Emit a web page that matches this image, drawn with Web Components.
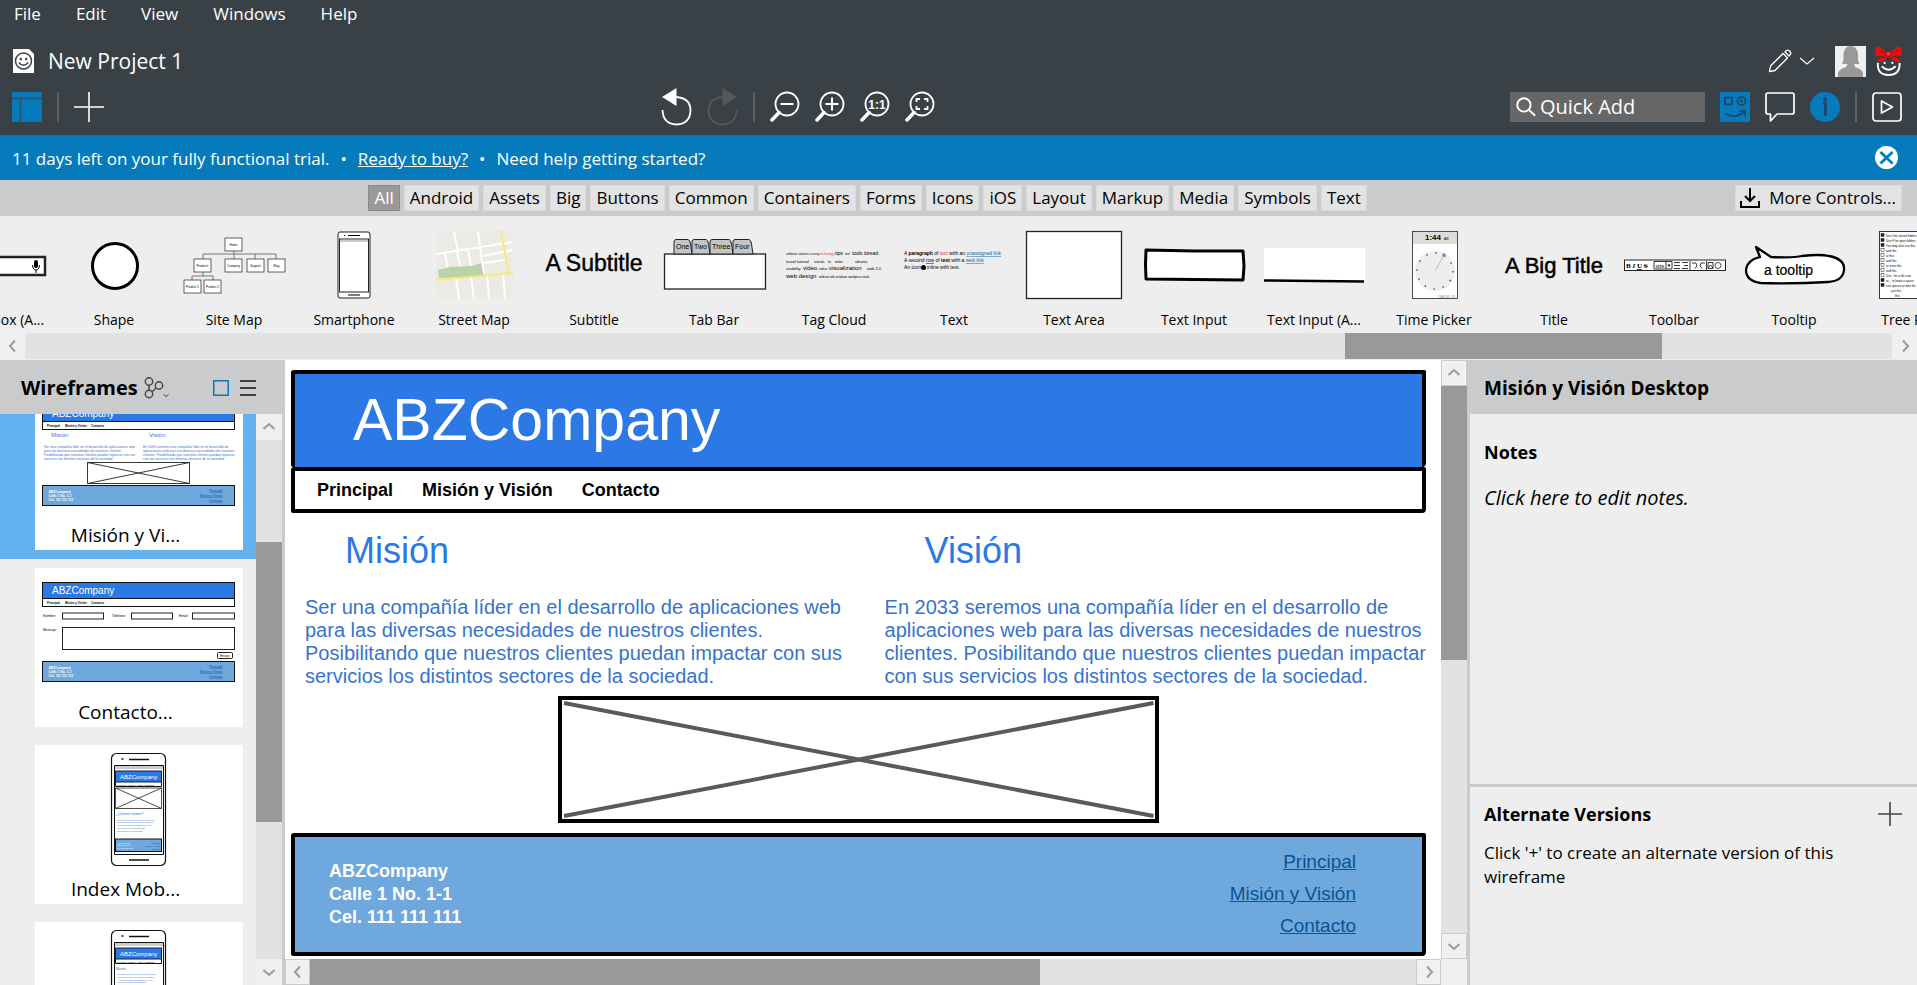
<!DOCTYPE html>
<html lang="en">
<head>
<meta charset="utf-8">
<title>New Project 1</title>
<style>
html, body { margin: 0; height: 100%; }
body { font-family: "Open Sans", "Noto Sans", sans-serif; font-size: 17px; color: #000; background: #eee; overflow: hidden; }
</style>
</head>
<body>
<wire-app></wire-app>
<script>
const base = `*{box-sizing:border-box}button{font:inherit;color:inherit;background:none;border:0;padding:0;margin:0;cursor:pointer}svg{display:block}h1,h2,h3,p,ul{margin:0;padding:0}a{color:inherit}`;
const define = (name, css, html) => customElements.define(name, class extends HTMLElement {
  constructor() {
    super();
    const markup = typeof html === 'function' ? html(this) : html;
    this.attachShadow({ mode: 'open' }).innerHTML = `<style>${base}${css}</style>${markup}`;
  }
});

/* Scroll bar: before / size / after are the proportions of the track */
define('scroll-bar', `
:host{display:flex;background:#e2e2e2;flex:none}
:host([axis=x]){height:26px}
:host([axis=y]){width:26px;flex-direction:column}
button{flex:none;width:25px;height:26px;background:#f0f0f0;display:grid;place-items:center}
:host([axis=y]) button{width:100%}
:host([framed]) button{border:1px solid #cacaca;outline:1px solid #f4f4f4;outline-offset:-2px}
:host([axis=y]) svg{transform:rotate(90deg)}
.thumb{background:#999}
`, el => {
  const [a, b, c] = el.getAttribute('parts').split(' ');
  const s = d => `<svg width="16" height="16" viewBox="0 0 16 16" fill="none" stroke="#9b9b9b" stroke-width="2"><path d="${d}"/></svg>`;
  return `<button aria-label="Back">${s('M10 2.500L5 8L10 13.500')}</button>
  <div style="flex:${a} 0 0"></div><div class="thumb" style="flex:${b} 0 0"></div><div style="flex:${c} 0 0"></div>
  <button aria-label="Forward">${s('M6 2.500L11 8L6 13.500')}</button>`;
});

define('menu-bar', `
:host{display:block;color:#fff}
nav{display:flex;gap:35px;padding:0 14px;height:28px;align-items:center}
button{line-height:24px}
`, `<nav>${['File', 'Edit', 'View', 'Windows', 'Help'].map(t => `<button>${t}</button>`).join('')}</nav>`);

define('title-bar', `
:host{display:flex;justify-content:space-between;align-items:center;height:50px;padding:16px 15px 0 13px;color:#fff}
.name{display:flex;align-items:center;gap:14px}
h1{font-size:21px;font-weight:400;line-height:30px}
.user{display:flex;align-items:center}
.edit{display:flex;align-items:center;gap:7px;margin-right:20px}
.who{margin-right:9px}
`, `<div class="name">
<svg width="21" height="24" viewBox="0 0 21 24"><path d="M0 0H16L21 5V24H0Z" fill="#fff"/><circle cx="10.500" cy="12" r="8" fill="none" stroke="#3a4146" stroke-width="1.500"/><circle cx="7.800" cy="10" r="1.200" fill="#3a4146"/><circle cx="13.200" cy="10" r="1.200" fill="#3a4146"/><path d="M5.800 13.500Q10.500 19 15.200 13.500" fill="none" stroke="#3a4146" stroke-width="1.400"/></svg>
<h1>New Project 1</h1></div>
<div class="user">
<button class="edit" aria-label="Edit mode"><svg width="24" height="24" viewBox="0 0 24 24" fill="none" stroke="#fff" stroke-width="1.300" stroke-linejoin="round"><path d="M1.500 22.500L2.500 17L15 4.500L19.500 9L7 21.500ZM17 3L18.500 1.500Q20 .5 21.500 2L22 2.500Q23.500 4 22.200 5.500L21 7Z"/></svg>
<svg width="16" height="8" viewBox="0 0 16 8" fill="none" stroke="#fff" stroke-width="1.100"><path d="M1 1L8 7L15 1"/></svg></button>
<button class="who" aria-label="Account"><svg width="31" height="31" viewBox="0 0 31 31"><path d="M0 0H31V31H0Z" fill="#f0f0f0"/><path d="M3 31V27Q4 23 11 21L12.500 18H7Q9 15 8.500 8Q9.500 0 15.500 0Q22 0 23 8Q22.500 15 24.500 18H19L20 21Q27 23 28 27V31Z" fill="#999"/></svg></button>
<button aria-label="Balsamiq home"><svg width="27" height="31" viewBox="0 0 28 31" fill="none"><path d="M3 17Q2 29.500 14 29.500Q26 29.500 25.500 17M7 20.500Q14 27.500 21.500 20.500" stroke="#fff" stroke-width="2"/><circle cx="10" cy="17" r="1.200" fill="#fff"/><circle cx="18" cy="17" r="1.200" fill="#fff"/><path d="M12 6L4 0Q0 0 .5 5L.5 9.500L11 9.500L5 11.500L1.500 16L8 15.500L13 10H15L20 15.500L26.500 16L23 11.500L17 9.500L27.500 9.500L27.500 5Q28 0 24 0L16 6Z" fill="#f20d0d"/><path d="M4 4L10 7M24 4L18 7M3 12L11 10.500M25 12L17 10.500" stroke="#a01010"/><rect x="11.500" y="5" width="5" height="5" rx="1" fill="#ff2a2a" stroke="#a01010"/></svg></button>
</div>`);

const lens = inner => `<svg width="30" height="32" viewBox="0 0 30 32" fill="none" stroke="#fff"><circle cx="17" cy="13" r="11.500" stroke-width="1.800"/><path d="M9 21.500L2 29" stroke-width="3.500" stroke-linecap="round"/>${inner}</svg>`;
define('tool-bar', `
:host{display:flex;justify-content:space-between;align-items:center;height:57px;padding:0 15px 0 12px}
div{display:flex;align-items:center;gap:15px}
.mid{padding-right:18px}
.sep{width:2px;height:30px;background:#5c6164}
.quick{display:flex;align-items:center;gap:4px;background:#666;width:195px;height:30px;padding:0 6px}
.quick input{flex:1;min-width:0;border:0;background:none;outline:0;font:inherit;font-size:20px;line-height:28px;padding:0;color:#fff;height:28px}
.quick input::placeholder{color:#fff;opacity:1}
`, `<div>
<button aria-label="Toggle panels"><svg width="30" height="30" viewBox="0 0 30 30"><path d="M0 0H30V30H0Z" fill="#057bbb"/><path d="M0 6.500H30M8.500 7V30" stroke="#2c5068" stroke-width="1.500"/></svg></button>
<span class="sep"></span>
<button aria-label="New wireframe"><svg width="30" height="30" viewBox="0 0 30 30" stroke="#fff" stroke-width="1.600"><path d="M15 0V30M0 15H30"/></svg></button></div>
<div class="mid">
<button aria-label="Undo"><svg width="31" height="38" viewBox="0 0 31 38"><path d="M15.500 0V18L1 9Z" fill="#fff"/><path d="M15 9Q29.500 10 29.500 22.500Q29 36 15.500 36.500Q2 36 1.500 22" fill="none" stroke="#fff" stroke-width="1.800"/></svg></button>
<button aria-label="Redo" disabled><svg width="31" height="38" viewBox="0 0 31 38"><path d="M15.500 0V18L30 9Z" fill="#54585b"/><path d="M16 9Q1.500 10 1.500 22.500Q2 36 15.500 36.500Q29 36 29.500 22" fill="none" stroke="#54585b" stroke-width="1.800"/></svg></button>
<span class="sep"></span>
<button aria-label="Zoom out">${lens('<path d="M10.500 13H23.500" stroke-width="2"/>')}</button>
<button aria-label="Zoom in">${lens('<path d="M10.500 13H23.500M17 6.500V19.500" stroke-width="2"/>')}</button>
<button aria-label="Actual size">${lens('<text x="17" y="17.500" font-size="12" font-weight="700" fill="#fff" stroke="none" text-anchor="middle" font-family="Liberation Sans">1:1</text>')}</button>
<button aria-label="Zoom to fit">${lens('<path d="M11.500 11V8H15M19 8H22.500V11M22.500 15V18H19M15 18H11.500V15" stroke-width="1.800"/>')}</button>
</div>
<div>
<label class="quick"><svg width="20" height="20" viewBox="0 0 24 24" fill="none" stroke="#fff" stroke-width="2.300"><circle cx="9.500" cy="9.500" r="8"/><path d="M15 15L23 22.500"/></svg><input placeholder="Quick Add" aria-label="Quick Add"></label>
<button aria-label="UI library"><svg width="30" height="30" viewBox="0 0 30 30" fill="none" stroke="#20445c" stroke-width="1.600"><rect width="30" height="30" fill="#057bbb" stroke="none"/><rect x="5" y="5.500" width="7" height="7"/><circle cx="21.500" cy="9" r="4"/><circle cx="21.500" cy="9" r=".8"/><path d="M5 21.500Q14 27.500 24 20M19 19.500L25 18.500L25 24.500"/></svg></button>
<button aria-label="Comments"><svg width="30" height="30" viewBox="0 0 30 30" fill="none" stroke="#fff" stroke-width="1.700" stroke-linejoin="round"><path d="M3 1H27Q29 1 29 3V20Q29 22 27 22H12L5.500 29V22H3Q1 22 1 20V3Q1 1 3 1Z"/></svg></button>
<button aria-label="Information"><svg width="30" height="30" viewBox="0 0 30 30"><circle cx="15" cy="15" r="15" fill="#057bbb"/><circle cx="15" cy="7.500" r="2" fill="#20445c"/><path d="M13 11.500H15.500V23.500" fill="none" stroke="#20445c" stroke-width="2.600"/></svg></button>
<span class="sep"></span>
<button aria-label="Present"><svg width="30" height="30" viewBox="0 0 30 30" fill="none" stroke="#fff" stroke-width="1.700" stroke-linejoin="round"><rect x="1" y="1" width="28" height="28" rx="3"/><path d="M9.500 9V21L20.500 15Z"/></svg></button>
</div>`);

define('trial-banner', `
:host{display:flex;align-items:center;justify-content:space-between;height:45px;padding:0 19px 0 12px;background:#057bbb;color:#fff}
p{display:flex;gap:11px;line-height:24px;padding-top:2px}
`, `<p><span>11 days left on your fully functional trial.</span><span>•</span><a href="#buy">Ready to buy?</a><span>•</span><span>Need help getting started?</span></p>
<button aria-label="Close"><svg width="23" height="23" viewBox="0 0 23 23"><circle cx="11.500" cy="11.500" r="11.500" fill="#fff"/><path d="M5.500 6L17.500 17.500M17.500 6L5.500 17.500" stroke="#057bbb" stroke-width="2.800"/></svg></button>`);

define('category-bar', `
:host{display:flex;align-items:center;height:36px;padding:0 15px 0 0;background:#c9cbcc}
nav{flex:1;display:flex;justify-content:center;gap:4px}
button{height:26px;padding:0 5px;line-height:24px;background:#e3e3e3;border:1px solid #dadada;white-space:nowrap}
[aria-pressed=true]{background:#999;border-color:#8a8a8a;color:#fff}
.more{display:flex;align-items:center;gap:9px;padding:0 5px 0 4px}
`, `<nav>${['All', 'Android', 'Assets', 'Big', 'Buttons', 'Common', 'Containers', 'Forms', 'Icons', 'iOS', 'Layout', 'Markup', 'Media', 'Symbols', 'Text'].map((t, i) => `<button aria-pressed="${!i}">${t}</button>`).join('')}</nav>
<button class="more"><svg width="20" height="20" viewBox="0 0 20 20" fill="none" stroke="#000" stroke-width="2"><path d="M10 0V13M5 8L10 13L15 8M1 13V19H19V13"/></svg>More Controls...</button>`);

/* One draggable control: picture in the slot, name under it */
define('control-item', `
:host{display:flex;flex-direction:column;align-items:center;flex:0 0 120px;width:120px}
::slotted(svg){display:block}
span{font-size:14px;line-height:24px;white-space:nowrap}
`, el => `<slot></slot><span>${el.getAttribute('name')}</span>`);

const box = (x, y, w, h, extra = '') => `<rect x="${x}" y="${y}" width="${w}" height="${h}" fill="#fff" stroke="#222" ${extra}/>`;
const t = (x, y, size, text, extra = '') => `<text x="${x}" y="${y}" font-size="${size}" ${extra}>${text}</text>`;
const controls = [
  ['Search Box (A...', box(10, 33, 101, 18, 'stroke-width="2.500"') + '<rect x="100" y="36" width="4" height="8" rx="2"/><path d="M98.500 41Q99 46 102 46Q105 46 105.500 41M102 46V49" fill="none" stroke="#000"/>'],
  ['Shape', '<circle cx="61" cy="42" r="22.500" fill="#fff" stroke="#000" stroke-width="3"/>'],
  ['Site Map', '<path d="M60 27V35M29 35V30H102V35M81 30V35M29 48V52M18 56V52H39V56" fill="none" stroke="#777"/>' +
    [[51, 14, 'Home'], [20, 35, 'Products'], [51, 35, 'Company'], [73, 35, 'Support'], [94, 35, 'Blog'], [10, 56, 'Product 1'], [30, 56, 'Product 2']].map(([x, y, s]) => box(x, y, 17, 13, 'stroke-width=".7"') + t(x + 8.5, y + 7.5, 3, s, 'text-anchor="middle"')).join('')],
  ['Smartphone', box(44, 8, 32, 66, 'rx="2"') + box(45.5, 15, 29, 53) + '<path d="M46 17H74" stroke="#999"/><path d="M54 11.500H66M54 71H66M50 11.500H51" stroke="#000"/>'],
  ['Street Map', '<path d="M22 7H99V75H22Z" fill="#eceae4"/><path d="M22 30L99 18M40 7L44 28M64 7L70 52M31 29L34 45M43 27L46 43M54 26L57 42M69 32L99 26M70 39L91 36M42 54L45 75M57 53L60 75M73 52L75 75M89 50L91 75" fill="none" stroke="#fff" stroke-width="2"/><path d="M24 46L36 43L58 42L67 39L70 52L25 54Z" fill="#b9d3a8"/><path d="M22 56L99 49M87 7L95 50" stroke="#f5ea78" stroke-width="2"/>'],
  ['Subtitle', t(60, 47, 23, 'A Subtitle', 'text-anchor="middle" stroke="#000" stroke-width=".4"')],
  ['Tab Bar', box(10.5, 30, 101, 35, 'stroke-width="1.300"') + [[20, 18, 'One'], [38, 18, 'Two'], [56, 23, 'Three'], [79, 20, 'Four']].map(([x, w, s]) => `<path d="M${x} 30V18Q${x} 15.500 ${x + 2} 15.500H${x + w - 4}Q${x + w - 2} 16 ${x + w - 1.5} 20L${x + w} 30Z" fill="#c4c4c4" stroke="#222"/>` + t(x + 2, 25, 7, s)).join('')],
  ['Tag Cloud', t(12, 31, 3, 'software statistics survey') + t(46, 31, 3, 'technology', 'fill="#e33"') + t(61, 31, 5, 'tips') + t(71, 31, 3, 'tool') + t(78, 31, 5, 'tools toread') + t(12, 39, 4, 'travel tutorial') + t(40, 39, 3, 'tutorials') + t(54, 39, 4, 'tv') + t(61, 39, 3, 'twitter') + t(81, 39, 4, 'ubuntu') + t(12, 46, 4, 'usability') + t(29, 46, 6, 'video') + t(45, 46, 3, 'videos') + t(55, 46, 6, 'visualization') + t(93, 46, 4, 'web 2.0') + t(12, 54, 6, 'web design') + t(45, 54, 3, 'website wiki windows wordpress work')],
  ['Text', t(10, 31, 5, 'A <tspan font-weight="700">paragraph</tspan> of <tspan fill="#e33">text</tspan> with an <tspan fill="#0b64a8" text-decoration="underline">unassigned link</tspan>') + t(10, 38, 5, 'A second <tspan text-decoration="underline">row</tspan> of <tspan font-weight="700">text</tspan> with a <tspan fill="#0b64a8" text-decoration="underline">web link</tspan>') + t(10, 45, 5, 'An icon') + '<circle cx="29.500" cy="43.500" r="2.500"/>' + t(33, 45, 5, 'inline with text.')],
  ['Text Area', box(12.5, 7.5, 95, 67, 'stroke-width="1.300"')],
  ['Text Input', '<path d="M12 26L60 27L109 27L110 42L109 56L60 55.500L12 55L11.500 40Z" fill="#fff" stroke="#000" stroke-width="3" stroke-linejoin="round"/>'],
  ['Text Input (A...', '<path d="M10 24H111V56H10Z" fill="#fff"/><path d="M10 56.500L110 57.500" stroke="#000" stroke-width="2.500"/>'],
  ['Time Picker', box(38.5, 7.5, 45, 67, 'stroke-width=".8"') + '<path d="M39 8H83V20H39Z" fill="#dcdcdc"/>' + t(51, 16, 8, '1:44', 'font-weight="700"') + t(70, 16, 3, 'AM') + '<circle cx="61" cy="47" r="20" fill="#eee"/><circle cx="61" cy="47" r="18" fill="none" stroke="#555" stroke-width="1.500" stroke-dasharray="1.500 7.900"/><path d="M61 47L70 31" stroke="#9cc0ea"/><circle cx="70" cy="31" r="1.800" fill="#5d93d6"/>' + t(64, 73.5, 3, 'CANCEL OK', 'fill="#5d93d6"')],
  ['Title', t(60, 49, 22, 'A Big Title', 'text-anchor="middle" stroke="#000" stroke-width=".5"')],
  ['Toolbar', box(10.5, 36, 101, 10.5) + '<text x="12" y="44" font-size="7" font-family="Liberation Serif" font-weight="700">B <tspan font-style="italic">I</tspan> <tspan text-decoration="underline">U</tspan> <tspan text-decoration="line-through">S</tspan></text><path d="M40 37.500H58V45H40ZM52 37.500V45M60 38.500H66M60 41.500H66M60 44.500H66M68 38.500H74M70 41.500H74M68 44.500H74M76 37V46M78 39H82Q84.500 42 81 44.500M91 39H87Q84.500 42 88 44.500M92.500 37V46M94 38.500H99V44.500H94ZM94 44L96.500 41L99 44" fill="none" stroke="#222" stroke-width=".9"/><path d="M53.500 40.500H56.500L55 43Z"/><circle cx="104" cy="41.500" r="3" fill="none" stroke="#222" stroke-width=".8"/>' + t(41.5, 43.5, 5, 'size')],
  ['Tooltip', '<path d="M26 33L22 23L37 33Q60 34 68 32Q86 30 95 32Q111 35 110 46Q109 57 94 58Q60 60 27 59Q12 57 12 46Q13 36 26 33Z" fill="#fff" stroke="#000" stroke-width="2.300" stroke-linejoin="round"/>' + t(30, 51, 14, 'a tooltip', 'stroke="#000" stroke-width=".2"')],
  ['Tree Pane', box(25.5, 7.5, 80, 67, 'stroke-width=".9"') + ['Use f for closed folders', 'Use F for open folders', 'You may also use this', 'and this', 'or this', 'and this', 'or even this', 'and this', 'Use - for a file icon', 'or _ to leave a space', 'use spaces or dots for'].map((s, i) => `<rect x="27" y="${9.5 + i * 5}" width="3" height="3" fill="${i > 2 && i < 9 ? '#fff' : '#222'}" stroke="#222" stroke-width=".5"/>` + t(32, 12.5 + i * 5, 3, s)).join('') + t(37, 67.5, 3, 'just this') + t(41, 72.5, 3, 'this')]
];
define('control-shelf', `
:host{display:block;background:#eee;border-bottom:1px solid #ededed}
.strip{display:flex;height:117px;padding-top:8px;overflow:hidden}
control-item:first-child{margin-left:-66px}
svg{font-family:"Liberation Sans",sans-serif}
`, `<div class="strip">${controls.map(([n, d]) => `<control-item name="${n}"><svg width="120" height="84" viewBox="0 0 120 84">${d}</svg></control-item>`).join('')}</div>
<scroll-bar axis="x" parts="1320 317 230"></scroll-bar>`);

/* Thumbnail drawings */
const tinyFoot = (x, y, w, h, s) => `<rect x="${x}" y="${y}" width="${w}" height="${h}" fill="#6fa8dc" stroke="#111"/>` +
  ['ABZCompany', 'Calle 1 No. 1-1', 'Cel. 111 111 111'].map((v, i) => t(x + 6, y + h * .37 + i * s * 1.15, s, v, 'fill="#fff" font-weight="700"')).join('') +
  ['Principal', 'Misión y Visión', 'Contacto'].map((v, i) => t(x + w - 12, y + h * .3 + i * s * 1.5, s, v, 'fill="#0b5394" text-anchor="end" text-decoration="underline"')).join('');
const tinyHead = `<rect x="7.500" y="14.500" width="192" height="16" fill="#2c78e4" stroke="#111"/>` + t(17, 26, 10, 'ABZCompany', 'fill="#fff"') +
  `<rect x="7.500" y="30.500" width="192" height="8" fill="#fff" stroke="#111"/>` + t(12, 36, 3, 'Principal', 'font-weight="700"') + t(30, 36, 3, 'Misión y Visión', 'font-weight="700"') + t(56, 36, 3, 'Contacto', 'font-weight="700"');
const lines = (x, y, s, step, arr) => arr.map((v, i) => t(x, y + i * step, s, v, 'fill="#3672c9"')).join('');
const mision = ['Ser una compañía líder en el desarrollo de aplicaciones web', 'para las diversas necesidades de nuestros clientes.', 'Posibilitando que nuestros clientes puedan impactar con sus', 'servicios los distintos sectores de la sociedad.'];
const vision = ['En 2033 seremos una compañía líder en el desarrollo de', 'aplicaciones web para las diversas necesidades de nuestros', 'clientes. Posibilitando que nuestros clientes puedan impactar', 'con sus servicios los distintos sectores de la sociedad.'];
const drawMision = tinyHead + t(16, 46, 6, 'Misión', 'fill="#2c78e4"') + t(114, 46, 6, 'Visión', 'fill="#2c78e4"') + lines(9, 57, 3.4, 4, mision) + lines(108, 57, 3.4, 4, vision) +
  '<path d="M52.500 71.500H154.500V92.500H52.500ZL154.500 92.500M154.500 71.500L52.500 92.500" fill="#fff" stroke="#222" stroke-width=".9"/>' + tinyFoot(7.5, 94.5, 192, 20, 3.4);
const drawContacto = tinyHead + t(8, 49, 3.4, 'Nombre:') + box(27.5, 45, 41, 6) + t(77, 49, 3.4, 'Teléfono:') + box(96.5, 45, 41, 6) + t(144, 49, 3.4, 'Email:') + box(157.5, 45, 42, 6) + t(8, 63, 3.4, 'Mensaje:') + box(27.5, 59.5, 172, 22) + box(182.5, 84.5, 15, 6, 'rx="1"') + t(185, 89, 3.4, 'Enviar') + tinyFoot(7.5, 93.5, 192, 20, 3.4);
const phone = body => '<rect x="76.500" y="8.500" width="54" height="112" rx="5" fill="#fff" stroke="#111" stroke-width="1.200"/><path d="M79.500 20.500H128.500V109.500H79.500Z" fill="#fff" stroke="#111"/><path d="M80 21H128V24H80Z" fill="#ccc"/><path d="M94 14.500H114M94 115H114M86.500 14H88.500" stroke="#111" stroke-width="1.600"/><rect x="80.500" y="26" width="46" height="11" fill="#2c78e4" stroke="#124"/>' + t(85, 34, 6, 'ABZCompany', 'fill="#fff"') + '<path d="M80.500 37V41.500H126.500V37" fill="none" stroke="#111"/>' + t(82, 40.5, 2.4, 'Principal &#160;Misión y Visión &#160;Contacto') + body;
const about = ['Somos una empresa que desarrolla', 'aplicaciones web para los clientes', 'y sus diversas necesidades, con', 'servicios para los distintos', 'sectores de la sociedad.'];
const drawIndex = phone('<path d="M80.500 43H126.500V63.500H80.500ZL126.500 63.500M126.500 43L80.500 63.500" fill="none" stroke="#222" stroke-width=".8"/>' + t(81, 70, 3.4, '¿Quiénes somos?', 'fill="#2c78e4"') + lines(82, 75.5, 2.4, 2.8, about) + '<rect x="80.500" y="94" width="46" height="12.500" fill="#6fa8dc" stroke="#111"/>' + ['ABZCompany', 'Calle 1 No. 1-1', 'Cel. 111 111 111'].map((v, i) => t(82, 98.5 + i * 2.6, 2.2, v, 'fill="#fff"')).join('') + ['Principal', 'Misión y Visión', 'Contacto'].map((v, i) => t(125, 98.5 + i * 3, 2.2, v, 'fill="#0b5394" text-anchor="end"')).join(''));
const drawMobile = phone(t(81, 48, 3.4, 'Misión', 'fill="#2c78e4"') + lines(83, 53, 2.4, 2.8, about));

define('wire-card', `
:host{display:block;padding:9px 13px 9px 35px}
:host([current]){background:#63b0ee}
article{background:#fff;height:159px;overflow:hidden}
h3{font-size:19px;font-weight:400;line-height:30px;text-align:center;padding-right:27px}
::slotted(svg){display:block;width:100%}
`, el => `<article><slot></slot><h3>${el.getAttribute('name')}</h3></article>`);

define('wire-list', `
:host{display:flex;flex-direction:column;background:#c9cbcc;min-height:0;padding-right:3px}
header{display:flex;align-items:center;height:54px;flex:none;padding:2px 26px 0 21px}
h2{font-size:20px;line-height:28px;margin-right:6px}
.view{margin-left:auto;display:flex;gap:11px}
.body{flex:1;min-height:0;display:flex}
.list{flex:1;min-width:0;background:#eee;overflow:hidden}
wire-card:first-child{margin-top:-32px}
svg{font-family:"Liberation Sans",sans-serif}
`, `<header><h2>Wireframes</h2>
<button aria-label="Branches"><svg width="26" height="22" viewBox="0 0 26 22" fill="none" stroke="#444" stroke-width="1.400"><circle cx="5" cy="4.500" r="3.700"/><circle cx="5" cy="17" r="3.700"/><circle cx="15" cy="8.500" r="3.700"/><path d="M5 8V13M8 15L12 11"/><path d="M19.500 17.500L22 19.500L24.500 17.500" stroke-width="1"/></svg></button>
<div class="view"><button aria-label="Thumbnail view"><svg width="16" height="16" viewBox="0 0 16 16"><path d="M.75 .75H15.250V15.250H.75Z" fill="none" stroke="#057bbb" stroke-width="1.500"/></svg></button>
<button aria-label="List view"><svg width="16" height="16" viewBox="0 0 16 16"><path d="M0 1H16M0 8H16M0 15H16" stroke="#111" stroke-width="1.600"/></svg></button></div></header>
<div class="body"><div class="list">
${[['Misión y Vi...', drawMision, 'current'], ['Contacto...', drawContacto, ''], ['Index Mob...', drawIndex, ''], ['Misión Mob...', drawMobile, '']].map(([n, d, c]) => `<wire-card name="${n}" ${c}><svg height="129" viewBox="0 0 208 129">${d}</svg></wire-card>`).join('')}
</div><scroll-bar axis="y" parts="102 280 137"></scroll-bar></div>`);

/* The wireframe being edited */
define('mock-page', `
:host{display:block;flex:1;min-width:0;overflow:hidden;background:#fff;padding:10px 15px 0 6px;font-family:"Liberation Sans",Arial,sans-serif}
header,nav,footer{border:4px solid #000;border-radius:3px 2px 4px 2px}
header{height:97px;background:#2c78e4;color:#fff;padding:16px 0 0 58px;border-bottom:0}
h1{font-size:59px;line-height:60px;font-weight:400}
nav{height:46px;display:flex;align-items:center;gap:29px;padding:0 22px;font-size:18px;font-weight:700}
nav a{text-decoration:none}
.cols{display:grid;grid-template-columns:29fr 27fr;padding:17px 0 0 14px;color:#2c78e4}
h2{font-size:36px;line-height:42px;font-weight:400;padding-left:40px;margin-bottom:24px}
.cols p{font-size:20px;line-height:23px;white-space:nowrap;color:#3573cf}
.image{width:53%;margin:8px auto 10px;height:127px;border:4px solid #000}
.image svg{width:100%;height:100%}
footer{height:123px;background:#6fa8dc;display:flex;justify-content:space-between;align-items:center;padding:0 66px 0 34px}
address{font-style:normal;font-weight:700;font-size:18px;line-height:23px;color:#fff}
.links{display:flex;flex-direction:column;align-items:flex-end;font-size:19px;line-height:32px;color:#0b5394;padding-bottom:2px}
`, `<header><h1>ABZCompany</h1></header>
<nav><a href="#principal">Principal</a><a href="#mision">Misión y Visión</a><a href="#contacto">Contacto</a></nav>
<div class="cols"><section><h2>Misión</h2><p>${mision.join('<br>')}</p></section><section><h2>Visión</h2><p>${vision.join('<br>')}</p></section></div>
<div class="image"><svg viewBox="0 0 593 119" preserveAspectRatio="none"><path d="M2 3L591 116M591 3L2 116" stroke="#5a5a5a" stroke-width="4"/></svg></div>
<footer><address>ABZCompany<br>Calle 1 No. 1-1<br>Cel. 111 111 111</address>
<div class="links"><a href="#principal">Principal</a><a href="#mision">Misión y Visión</a><a href="#contacto">Contacto</a></div></footer>`);

define('canvas-pane', `
:host{display:flex;flex-direction:column;min-width:0;min-height:0;background:#fff}
.row{flex:1;min-height:0;display:flex}
.foot{display:flex;background:#f0f0f0}
.foot scroll-bar{flex:1}
.corner{width:26px}
`, `<div class="row"><mock-page></mock-page><scroll-bar axis="y" framed parts="0 274 274"></scroll-bar></div>
<div class="foot"><scroll-bar axis="x" framed parts="0 729 376"></scroll-bar><div class="corner"></div></div>`);

define('info-pane', `
:host{display:flex;flex-direction:column;min-height:0;background:#eee;border-left:3px solid #c9cbcc}
h2,h3{font-size:18px;line-height:26px}
.top{background:#c9cbcc;height:54px;padding:15px 14px 0;flex:none;font-size:19px}
.notes{flex:1;padding:25px 14px 0;min-height:0}
.notes p{font-style:italic;font-size:20px;line-height:28px;margin-top:19px}
.alt{height:201px;border-top:3px solid #c9cbcc;padding:14px 15px 0 14px}
.head{display:flex;justify-content:space-between;align-items:center}
.alt p{line-height:24px;margin-top:14px}
`, `<h2 class="top">Misión y Visión Desktop</h2>
<section class="notes"><h3>Notes</h3><p>Click here to edit notes.</p></section>
<section class="alt"><div class="head"><h3>Alternate Versions</h3><button aria-label="Add alternate version"><svg width="24" height="24" viewBox="0 0 24 24" stroke="#444" stroke-width="1.600"><path d="M12 0V24M0 12H24"/></svg></button></div>
<p>Click '+' to create an alternate version of this wireframe</p></section>`);

define('wire-app', `
:host{display:flex;flex-direction:column;height:100vh}
.dark{background:#3a4146}
main{flex:1;min-height:0;display:grid;grid-template-columns:285px minmax(0,1fr) 450px;grid-template-rows:minmax(0,1fr)}
`, `<div class="dark"><menu-bar></menu-bar><title-bar></title-bar><tool-bar></tool-bar></div>
<trial-banner></trial-banner><category-bar></category-bar><control-shelf></control-shelf>
<main><wire-list></wire-list><canvas-pane></canvas-pane><info-pane></info-pane></main>`);
</script>
</body>
</html>
